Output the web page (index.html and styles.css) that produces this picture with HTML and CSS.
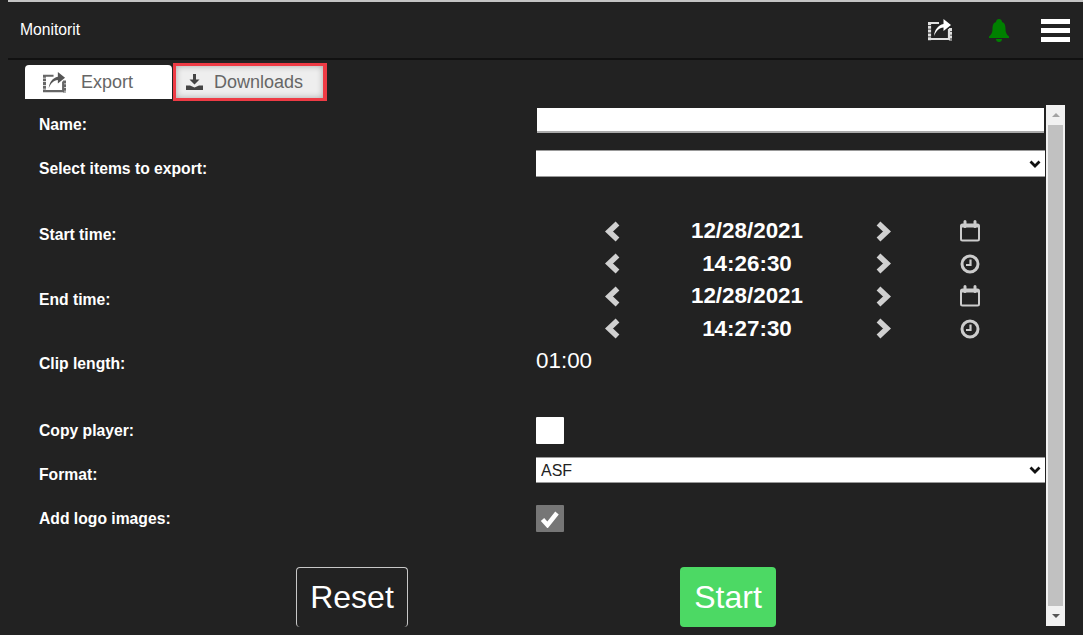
FILE: index.html
```html
<!DOCTYPE html>
<html lang="en">

<head>
    <meta charset="UTF-8">
    <meta name="viewport" content="width=device-width, initial-scale=1.0">
    <title>Monitorit</title>
    <link rel="stylesheet" href="styles.css">
</head>

<body>
    <div class="topline"></div>

    <!-- Header -->
    <header class="header">
        <span class="brand">Monitorit</span>
        <svg class="export-icon" viewBox="0 0 24 24" width="24" height="24">
            <path d="M11 5H3M3 21h18V11" fill="none" stroke="#e0e0e0" stroke-width="2.200"/>
            <path d="M1.500 4v18.500M22.500 10v12.500" stroke="#e0e0e0" stroke-width="3.200" stroke-dasharray="3 .8"/>
            <path d="M6 18c.5-6 4-11 9.500-12V1L23 7l-7.500 6V9.500C11 10 8 13 6 18z" fill="#fff"/>
        </svg>
        <svg class="bell-icon" viewBox="0 0 20 23" width="20" height="23">
            <path d="M10 0c2 0 3 1.500 3 3 3 1 3.500 4 3.500 7 0 3 1 5.500 3.500 7.500v1.500H0v-1.500C2.500 15.500 3.500 13 3.500 10c0-3 .5-6 3.500-7 0-1.500 1-3 3-3z" fill="#008000"/>
            <path d="M7 20h6c0 1.800-1.300 3-3 3s-3-1.200-3-3z" fill="#008000"/>
        </svg>
        <div class="hamburger">
            <span></span>
            <span></span>
            <span></span>
        </div>
    </header>

    <!-- Tabs -->
    <nav class="tabs">
        <a class="tab tab-export">
            <svg viewBox="0 0 24 24" width="23" height="23">
                <path d="M11 5H3M3 21h18V11" fill="none" stroke="#666" stroke-width="2.200"/>
                <path d="M1.500 4v18.500M22.500 10v12.500" stroke="#666" stroke-width="3.200" stroke-dasharray="3 .8"/>
                <path d="M6 18c.5-6 4-11 9.500-12V1L23 7l-7.500 6V9.500C11 10 8 13 6 18z" fill="#555"/>
            </svg>
            Export
        </a>
        <a class="tab tab-downloads">
            <svg viewBox="0 0 17 16" width="17" height="16">
                <path d="M7 0h3v5.500h3.500l-5 5-5-5H7z" fill="#444"/>
                <path d="M0 11.500h4l4.500 2 4.500-2h4V16H0z" fill="#444"/>
            </svg>
            Downloads
        </a>
    </nav>

    <div class="main">
        <form class="export-form">
            <div class="row row-name">
                <label class="field-label pad-9" for="clipName">Name:</label>
                <input class="text-input" type="text" id="clipName">
            </div>

            <div class="row row-items">
                <label class="field-label pad-8" for="items">Select items to export:</label>
                <select class="select-input select-items" id="items"></select>
            </div>

            <!-- Start and end time -->
            <div class="row">
                <div class="time-labels">
                    <span class="field-label pad-9">Start time:</span>
                    <span class="field-label pad-9">End time:</span>
                </div>
                <div class="time-grid">
                    <svg class="chevron" viewBox="0 0 15 21"><path d="M12.500 2.500 4 10.500l8.500 8"/></svg>
                    <span class="time-value">12/28/2021</span>
                    <svg class="chevron" viewBox="0 0 15 21"><path d="M2.500 2.500 11 10.500l-8.500 8"/></svg>
                    <svg class="calendar" viewBox="0 0 22 22"><use href="#calendarShape"/></svg>

                    <svg class="chevron" viewBox="0 0 15 21"><path d="M12.500 2.500 4 10.500l8.500 8"/></svg>
                    <span class="time-value">14:26:30</span>
                    <svg class="chevron" viewBox="0 0 15 21"><path d="M2.500 2.500 11 10.500l-8.500 8"/></svg>
                    <svg class="clock" viewBox="0 0 20 20"><use href="#clockShape"/></svg>

                    <svg class="chevron" viewBox="0 0 15 21"><path d="M12.500 2.500 4 10.500l8.500 8"/></svg>
                    <span class="time-value">12/28/2021</span>
                    <svg class="chevron" viewBox="0 0 15 21"><path d="M2.500 2.500 11 10.500l-8.500 8"/></svg>
                    <svg class="calendar" viewBox="0 0 22 22"><use href="#calendarShape"/></svg>

                    <svg class="chevron" viewBox="0 0 15 21"><path d="M12.500 2.500 4 10.500l8.500 8"/></svg>
                    <span class="time-value">14:27:30</span>
                    <svg class="chevron" viewBox="0 0 15 21"><path d="M2.500 2.500 11 10.500l-8.500 8"/></svg>
                    <svg class="clock" viewBox="0 0 20 20"><use href="#clockShape"/></svg>
                </div>
            </div>

            <div class="row row-clip">
                <span class="field-label pad-8">Clip length:</span>
                <span class="clip-value">01:00</span>
            </div>

            <div class="row row-copy">
                <label class="field-label pad-3" for="copyPlayer">Copy player:</label>
                <input class="check-input" type="checkbox" id="copyPlayer">
            </div>

            <div class="row row-format">
                <label class="field-label pad-7" for="format">Format:</label>
                <select class="select-input select-format" id="format">
                    <option>ASF</option>
                </select>
            </div>

            <div class="row row-logo">
                <label class="field-label pad-3" for="addLogo">Add logo images:</label>
                <input class="check-input" type="checkbox" id="addLogo" checked>
            </div>

            <div class="actions">
                <button class="btn btn-reset" type="button">Reset</button>
                <button class="btn btn-start" type="button">Start</button>
            </div>
        </form>

        <!-- Scrollbar -->
        <div class="scrollbar">
            <span class="arrow arrow-up"></span>
            <div class="thumb"></div>
            <span class="arrow arrow-down"></span>
        </div>
    </div>

    <svg class="defs" width="0" height="0">
        <symbol id="calendarShape" viewBox="0 0 22 22">
            <rect x="2" y="4.500" width="18" height="16" rx="1.500" fill="none" stroke="#ccc" stroke-width="2"/>
            <path d="M2 4.500h18v3H2z" fill="#ccc"/>
            <path d="M6 1.500v5M16 1.500v5" stroke="#ccc" stroke-width="3" stroke-linecap="round"/>
        </symbol>
        <symbol id="clockShape" viewBox="0 0 20 20">
            <circle cx="10" cy="10" r="8" fill="none" stroke="#ccc" stroke-width="3"/>
            <path d="M10.500 5.500v5.500H6" fill="none" stroke="#ccc" stroke-width="2.200"/>
        </symbol>
    </svg>
</body>

</html>
```

FILE: styles.css
```css
* {
    box-sizing: border-box;
}

html,
body {
    height: 100%;
}

body {
    margin: 0;
    overflow: hidden;
    font-family: "Liberation Sans", Arial, sans-serif;
    background-color: #222222;
    color: #fff;
}

.defs {
    position: absolute;
}

.topline {
    height: 2px;
    margin-left: 8px;
    background-color: #c4c4c4;
}

/* Header */
.header {
    display: flex;
    align-items: center;
    height: 58px;
    margin-left: 8px;
    padding: 0 13px 0 12px;
    border-bottom: 2px solid #111;
}

.brand {
    flex: 1;
    font-size: 15.7px;
}

.export-icon {
    margin-right: 37px;
}

.bell-icon {
    margin-right: 32px;
}

.hamburger {
    display: flex;
    flex-direction: column;
    gap: 4px;
    width: 29px;
}

.hamburger span {
    display: block;
    height: 5px;
    background-color: #fff;
}

/* Tabs */
.tabs {
    display: flex;
    align-items: flex-start;
    height: 34px;
    margin: 5px 0 6px 25px;
}

.tab {
    display: flex;
    align-items: center;
    font-size: 18px;
    color: #666;
}

.tab-export {
    width: 147px;
    height: 34px;
    padding-left: 18px;
    gap: 15px;
    background-color: #fff;
    border-radius: 4px 4px 0 0;
}

.tab-downloads {
    width: 154px;
    height: 38px;
    margin: -2px 0 0 1px;
    padding-left: 10px;
    gap: 11px;
    background-color: #eeeeee;
    border: 3px solid #ee3b45;
    border-right-width: 4px;
    box-shadow: inset 0 0 6px rgba(0, 0, 0, 0.3);
}

/* Form */
.main {
    display: flex;
    align-items: flex-start;
}

.export-form {
    width: 1046px;
    padding-left: 39px;
}

.row {
    display: grid;
    grid-template-columns: 497px 509px;
    align-items: start;
}

.field-label {
    display: block;
    font-size: 15.7px;
    font-weight: bold;
    line-height: 22px;
}

.pad-3 {
    padding-top: 3px;
}

.pad-7 {
    padding-top: 7px;
}

.pad-8 {
    padding-top: 8px;
}

.pad-9 {
    padding-top: 9px;
}

.row-name {
    height: 45px;
}

.row-items {
    height: 65px;
}

.row-clip {
    height: 72px;
}

.row-copy {
    height: 40px;
}

.row-format {
    height: 48px;
}

.row-logo {
    height: 62px;
}

.text-input {
    width: 507px;
    height: 25px;
    margin: 3px 0 0 1px;
    background-color: #fff;
    border: none;
    border-bottom: 2px solid #aaa;
}

.select-input {
    appearance: none;
    width: 509px;
    padding-left: 5px;
    font-family: inherit;
    font-size: 16px;
    color: #222;
    border: none;
    border-top: 1px solid #999;
    border-bottom: 1px solid #999;
    border-radius: 0;
    background-color: #fff;
    background-image: url("data:image/svg+xml,%3Csvg xmlns='http://www.w3.org/2000/svg' width='12' height='8'%3E%3Cpath d='M1.500 1.500 6 6l4.500-4.500' fill='none' stroke='%23111' stroke-width='2.800'/%3E%3C/svg%3E");
    background-repeat: no-repeat;
    background-position: right 4px center;
}

.select-items {
    height: 27px;
}

.select-format {
    height: 26px;
}

.time-labels {
    display: flex;
    flex-direction: column;
}

.time-labels .field-label {
    height: 65px;
}

.time-grid {
    display: grid;
    grid-template-columns: 152px 118px 154px 20px;
    grid-auto-rows: 32.5px;
    align-items: center;
    justify-items: center;
}

.time-value {
    font-size: 22.4px;
    font-weight: bold;
    white-space: nowrap;
}

.chevron {
    width: 15px;
    height: 21px;
}

.chevron path {
    fill: none;
    stroke: #d0d0d0;
    stroke-width: 5.5;
}

.calendar {
    width: 22px;
    height: 22px;
}

.clock {
    width: 20px;
    height: 20px;
}

.clip-value {
    font-size: 22.4px;
    line-height: 32px;
}

.check-input {
    appearance: none;
    display: block;
    width: 28px;
    height: 27px;
    margin: 0;
    background-color: #fff;
    border-radius: 1px;
}

.check-input:checked {
    background-color: #767676;
    background-image: url("data:image/svg+xml,%3Csvg xmlns='http://www.w3.org/2000/svg' width='20' height='18'%3E%3Cpath d='M2.500 9.500 7.500 15 17 3' fill='none' stroke='%23fff' stroke-width='4.500'/%3E%3C/svg%3E");
    background-repeat: no-repeat;
    background-position: center;
}

/* Buttons */
.actions {
    display: flex;
    gap: 272px;
    margin-left: 257px;
}

.btn {
    height: 60px;
    padding: 0;
    font-family: inherit;
    font-size: 32px;
    color: #fff;
    border-radius: 4px;
}

.btn-reset {
    width: 112px;
    background-color: transparent;
    border: 1px solid #c8c8c8;
    border-bottom: none;
}

.btn-start {
    width: 96px;
    background-color: #4cd964;
    border: none;
}

/* Scrollbar */
.scrollbar {
    display: flex;
    flex-direction: column;
    align-items: center;
    width: 19px;
    height: 521px;
    background-color: #f1f1f1;
}

.thumb {
    flex: 1;
    width: 15px;
    background-color: #c1c1c1;
}

.arrow {
    display: block;
    width: 0;
    height: 0;
    margin: 8px 0;
    border-left: 4px solid transparent;
    border-right: 4px solid transparent;
}

.arrow-up {
    border-bottom: 4px solid #a3a3a3;
}

.arrow-down {
    border-top: 4px solid #555;
}
```
